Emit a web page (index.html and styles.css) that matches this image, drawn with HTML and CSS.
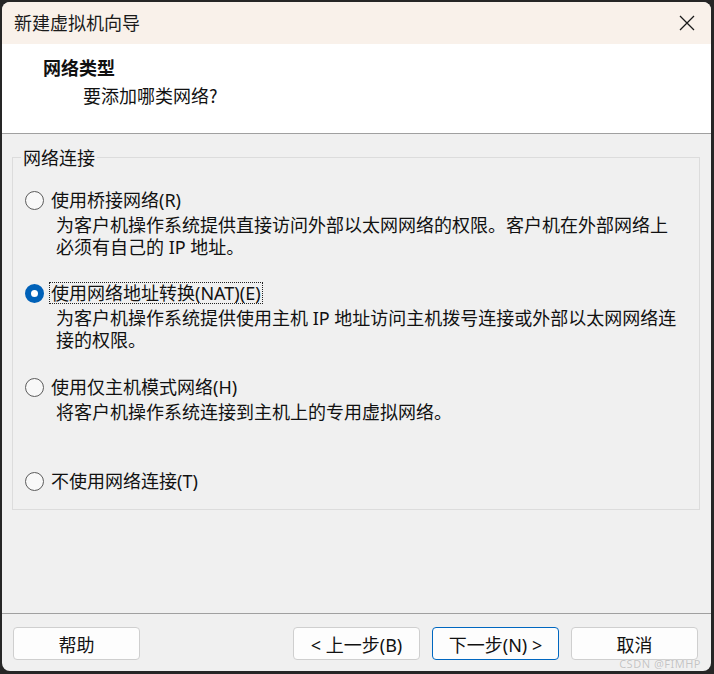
FILE: index.html
```html
<!DOCTYPE html>
<html lang="zh-CN">
<head>
<meta charset="utf-8">
<title>新建虚拟机向导</title>
<link rel="stylesheet" href="styles.css">
</head>
<body>
<div class="window">
  <div class="titlebar">
    <span class="title">新建虚拟机向导</span>
    <span class="close" aria-label="关闭">
      <svg width="16" height="16" viewBox="0 0 16 16"><path d="M1 1 L15 15 M15 1 L1 15" stroke="#1a1a1a" stroke-width="1.3" fill="none"/></svg>
    </span>
  </div>
  <div class="header">
    <div class="h-title">网络类型</div>
    <div class="h-sub">要添加哪类网络?</div>
  </div>
  <div class="content">
    <fieldset class="group">
      <legend>网络连接</legend>
      <div class="option">
        <div class="opt-row"><span class="radio"></span><span class="label">使用桥接网络(R)</span></div>
        <div class="desc">为客户机操作系统提供直接访问外部以太网网络的权限。客户机在外部网络上<br>必须有自己的 IP 地址。</div>
      </div>
      <div class="option">
        <div class="opt-row"><span class="radio checked"></span><span class="label focus">使用网络地址转换(NAT)(E)</span></div>
        <div class="desc">为客户机操作系统提供使用主机 IP 地址访问主机拨号连接或外部以太网网络连<br>接的权限。</div>
      </div>
      <div class="option">
        <div class="opt-row"><span class="radio"></span><span class="label">使用仅主机模式网络(H)</span></div>
        <div class="desc">将客户机操作系统连接到主机上的专用虚拟网络。</div>
      </div>
      <div class="option last">
        <div class="opt-row"><span class="radio"></span><span class="label">不使用网络连接(T)</span></div>
      </div>
    </fieldset>
  </div>
  <div class="footer">
    <button class="btn">帮助</button>
    <div class="spacer"></div>
    <button class="btn">&lt; 上一步(B)</button>
    <button class="btn primary">下一步(N) &gt;</button>
    <button class="btn">取消</button>
  </div>
  <div class="watermark">CSDN @FIMHP</div>
</div>
</body>
</html>
```
FILE: styles.css
```css
html, body {
  margin: 0;
  padding: 0;
  background: #262626;
  width: 714px;
  height: 674px;
  overflow: hidden;
}
body {
  font-family: "Noto Sans", "Noto Sans CJK SC", sans-serif;
  color: #111;
}
.window {
  position: relative;
  margin: 2px 3px 3px 2px;
  width: 709px;
  height: 669px;
  border-radius: 8px;
  overflow: hidden;
  background: #f0f0f0;
  display: flex;
  flex-direction: column;
}
.titlebar {
  height: 42px;
  flex: none;
  background: #f9f1ea;
  display: flex;
  align-items: center;
  justify-content: space-between;
  padding: 0 16px 0 12px;
}
.title {
  font-family: "Noto Sans CJK SC", sans-serif;
  font-size: 18px;
  line-height: 22px;
  color: #1a1a1a;
  margin-top: -2px;
}
.close {
  display: flex;
  width: 16px;
  height: 16px;
}
.header {
  height: 89px;
  flex: none;
  background: #fff;
  border-bottom: 1px solid #a0a0a0;
  font-size: 18px;
  line-height: 22px;
}
.h-title {
  font-weight: bold;
  padding: 12px 0 0 41px;
  font-family: "Noto Sans CJK SC", sans-serif;
}
.h-sub {
  padding: 6px 0 0 81px;
  font-family: "Noto Sans CJK SC", sans-serif;
}
.content {
  flex: 1;
  padding: 13px 11px 0 10px;
}
.group {
  margin: 0;
  padding: 0 0 17px 8px;
  border: 1px solid #dcdcdc;
  height: 363px;
  box-sizing: border-box;
}
.group legend {
  padding: 0 2px;
  font-size: 18px;
  line-height: 20px;
  font-family: "Noto Sans CJK SC", sans-serif;
}
.option {
  height: 94px;
  font-size: 18px;
}
.option:first-of-type {
  margin-top: 22px;
  height: 93px;
}
.opt-row {
  display: flex;
  align-items: center;
  height: 22px;
  padding-left: 4px;
}
.radio {
  width: 17px;
  height: 17px;
  border: 1px solid #5c5c5c;
  border-radius: 50%;
  background: #f8f8f8;
  flex: none;
}
.radio.checked {
  border: 6px solid #0061b8;
  width: 7px;
  height: 7px;
  background: #fff;
}
.label {
  margin-left: 5px;
  padding: 0 1px;
  line-height: 20px;
  border: 1px dotted transparent;
  white-space: nowrap;
}
.label.focus {
  border-color: #222;
}
.desc {
  margin-top: 3px;
  padding-left: 35px;
  line-height: 22px;
  white-space: nowrap;
}
.footer {
  flex: none;
  border-top: 1px solid #a0a0a0;
  display: flex;
  align-items: flex-start;
  padding: 13px 13px 0 11px;
  gap: 12px;
  box-sizing: border-box;
  height: 58px;
}
.spacer {
  flex: 1;
}
.btn {
  width: 127px;
  height: 33px;
  border: 1px solid #cfcfcf;
  border-radius: 4px;
  background: #fdfdfd;
  font-family: "Noto Sans", "Noto Sans CJK SC", sans-serif;
  font-size: 18px;
  color: #111;
  padding: 0;
}
.btn.primary {
  border-color: #0067c0;
}
.watermark {
  position: absolute;
  right: 10px;
  bottom: 0;
  font-family: "Noto Sans", sans-serif;
  font-size: 11px;
  line-height: 14px;
  color: #c4c4c4;
  text-shadow: 0 0 1px #fff;
  letter-spacing: 0.5px;
}
```
